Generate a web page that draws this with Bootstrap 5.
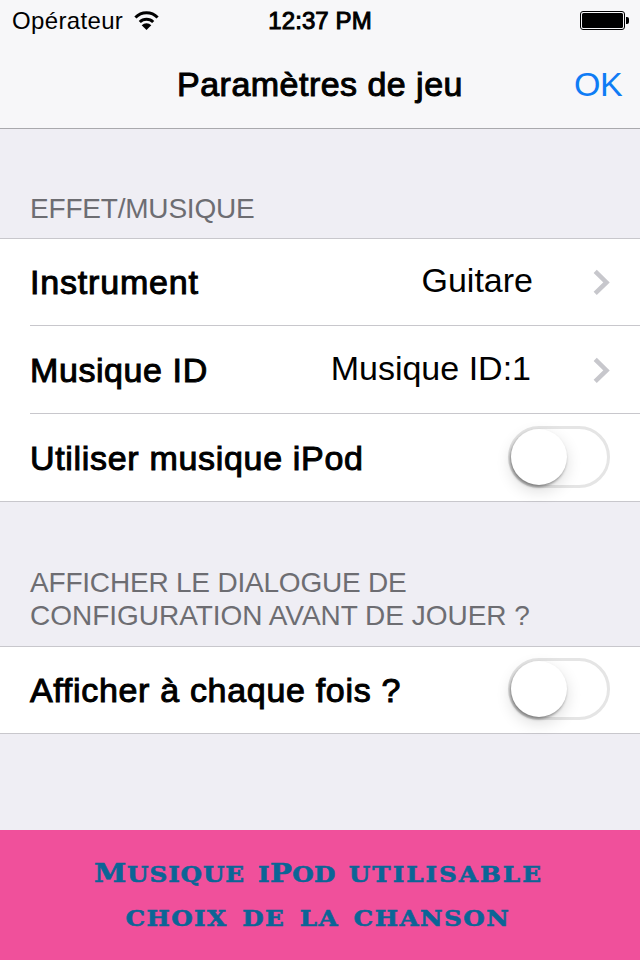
<!DOCTYPE html>
<html lang="fr">
<head>
<meta charset="utf-8">
<meta name="viewport" content="width=device-width, initial-scale=1">
<title>Paramètres de jeu</title>
<link href="https://cdn.jsdelivr.net/npm/bootstrap@5.3.0/dist/css/bootstrap.min.css" rel="stylesheet">
<style>
  body { font-family: "Liberation Sans", Arial, sans-serif; background: #efeef4; color: #000; width: 640px; height: 960px; overflow: hidden; }
  .top-area { height: 129px; background: #f7f7f9; border-bottom: 1px solid #a9a9ad; }
  .status { height: 40px; padding: 1px 11px 0 12px; font-size: 24px; line-height: 40px; }
  .status-side { flex: 1 1 0; }
  .carrier { letter-spacing: .35px; }
  .medium { -webkit-text-stroke: 1px currentColor; }
  .clock { letter-spacing: .1px; margin-right: 1px; }
  .title-bar { height: 88px; padding: 0 18px; font-size: 34px; line-height: 88px; }
  .title-side { flex: 1 1 0; }
  .page-title { letter-spacing: .47px; }
  .ok-link { color: #0f7cf5; font-size: 34px; letter-spacing: -.6px; }
  .group-label { color: #6d6d72; font-size: 28px; line-height: 33px; padding: 0 30px; letter-spacing: -.2px; }
  .label-one { padding-top: 63px; height: 109px; }
  .label-two { padding-top: 64px; height: 144px; }
  .label-wide { letter-spacing: -.02px; }
  .settings { border-top: 1px solid #c8c7cc; border-bottom: 1px solid #c8c7cc; }
  .setting { height: 87px; margin-left: 30px; padding: 0 30px 0 0; font-size: 34px; line-height: 40px; background: #fff; }
  .setting.divided { height: 88px; border-bottom: 1px solid #c8c7cc; }
  .settings .setting.divided:first-child { height: 87px; }
  .settings .setting.single { height: 86px; }
  .setting .medium { letter-spacing: .68px; }
  .setting .l1 { letter-spacing: .82px; }
  .setting .l2 { letter-spacing: .58px; }
  .value { margin-right: 60px; padding-bottom: 4px; }
  .v2 { margin-right: 62px; }
  .toggle { width: 102px; height: 62px; border: 3px solid #e5e5e5; border-radius: 31px; flex: none; margin-bottom: 2px; }
  .knob { width: 56px; height: 56px; border-radius: 50%; background: #fff; box-shadow: 0 6px 16px rgba(0,0,0,.14), -1px 2px 3px rgba(0,0,0,.4); }
  .promo { height: 130px; background: #f0509b; color: #0b6596; padding: 22px 4px 0 0; font-family: "DejaVu Serif", serif; font-weight: 700; font-size: 22px; line-height: 44px; word-spacing: 4px; -webkit-text-stroke: .6px currentColor; }
  .promo-line { transform: scaleX(1.12); width: fit-content; }
  .w1 { letter-spacing: .8px; }
  .w2 { letter-spacing: .3px; }
  .w3 { letter-spacing: 1.8px; }
  .p2 { letter-spacing: 1.3px; }
  .cap { font-size: 26px; line-height: 1; }
</style>
<script src="https://cdn.jsdelivr.net/npm/bootstrap@5.3.0/dist/js/bootstrap.bundle.min.js"></script>
</head>
<body class="d-flex flex-column">
<header class="top-area">
  <div class="status d-flex align-items-center">
    <div class="status-side d-flex align-items-center">
      <span class="carrier">Opérateur</span>
      <svg class="wifi ms-2" width="32" height="22" viewBox="0 0 32 22" fill="none" stroke="#000"><path d="M4.400 7.500a15.500 15.500 0 0 1 22.200 0M8.800 12a9.500 9.500 0 0 1 13.400 0" stroke-width="3"/><path d="M10.700 15.200a7 7 0 0 1 9.600 0L15.500 20z" fill="#000" stroke="none"/></svg>
    </div>
    <span class="clock medium">12:37 PM</span>
    <div class="status-side d-flex justify-content-end">
      <svg width="49" height="20" viewBox="0 0 49 20"><rect x=".5" y=".5" width="44" height="18" rx="2.5" fill="none" stroke="#000"/><rect x="2" y="2" width="41" height="15" rx="1.5"/><path d="M46 6h1a2 2 0 0 1 2 2v3a2 2 0 0 1-2 2h-1z"/></svg>
    </div>
  </div>
  <div class="title-bar d-flex align-items-center">
    <div class="title-side"></div>
    <span class="page-title medium">Paramètres de jeu</span>
    <div class="title-side text-end"><a class="ok-link text-decoration-none" href="#">OK</a></div>
  </div>
</header>
<main class="flex-grow-1">
  <div class="group-label label-one">EFFET/MUSIQUE</div>
  <div class="settings bg-white">
    <div class="setting divided d-flex align-items-center">
      <span class="medium me-auto l1">Instrument</span><span class="value v1">Guitare</span>
      <svg width="17" height="26" viewBox="0 0 17 26" fill="none" stroke="#c7c7cc" stroke-width="4.500"><path d="M2.200 2.400l11.300 11L2.200 24.400"/></svg>
    </div>
    <div class="setting divided d-flex align-items-center">
      <span class="medium me-auto l2">Musique ID</span><span class="value v2">Musique ID:1</span>
      <svg width="17" height="26" viewBox="0 0 17 26" fill="none" stroke="#c7c7cc" stroke-width="4.500"><path d="M2.200 2.400l11.300 11L2.200 24.400"/></svg>
    </div>
    <div class="setting d-flex align-items-center">
      <span class="medium me-auto l3">Utiliser musique iPod</span>
      <span class="toggle" role="switch" aria-checked="false"><span class="knob d-block"></span></span>
    </div>
  </div>
  <div class="group-label label-two">AFFICHER LE DIALOGUE DE<br><span class="label-wide">CONFIGURATION AVANT DE JOUER ?</span></div>
  <div class="settings bg-white">
    <div class="setting single d-flex align-items-center">
      <span class="medium me-auto l4">Afficher à chaque fois ?</span>
      <span class="toggle" role="switch" aria-checked="false"><span class="knob d-block"></span></span>
    </div>
  </div>
</main>
<footer class="promo text-center text-uppercase text-nowrap">
  <div class="promo-line mx-auto"><span class="w1"><span class="cap">M</span>usique</span> <span class="w2">i<span class="cap">P</span>od</span> <span class="w3">utilisable</span></div>
  <div class="promo-line mx-auto p2">choix de la chanson</div>
</footer>
</body>
</html>
